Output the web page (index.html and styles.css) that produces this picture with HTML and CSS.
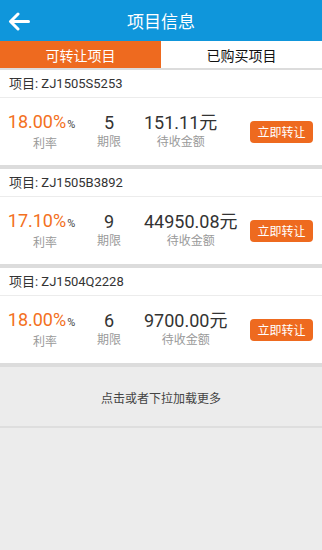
FILE: index.html
```html
<!DOCTYPE html>
<html lang="zh">
<head>
<meta charset="utf-8">
<title>项目信息</title>
<link rel="stylesheet" href="styles.css">
</head>
<body>
<header class="topbar">
  <span class="back">
    <svg width="22" height="20" viewBox="0 0 22 20"><path d="M20.5 9.5H3M10 2L2.5 9.5L10 17" fill="none" stroke="#fff" stroke-width="3" stroke-linecap="round" stroke-linejoin="round"/></svg>
  </span>
  <h1 class="title">项目信息</h1>
  <span></span>
</header>
<nav class="tabs">
  <div class="tab active">可转让项目</div>
  <div class="tab">已购买项目</div>
</nav>
<main class="list">
  <section class="card">
    <div class="card-head">项目: ZJ1505S5253</div>
    <div class="card-body">
      <div class="col rate"><div class="num">18.00%<small>%</small></div><div class="lbl">利率</div></div>
      <div class="col term"><div class="num dark">5</div><div class="lbl">期限</div></div>
      <div class="col amount"><div class="num dark">151.11元</div><div class="lbl">待收金额</div></div>
      <button class="btn">立即转让</button>
    </div>
  </section>
  <section class="card">
    <div class="card-head">项目: ZJ1505B3892</div>
    <div class="card-body">
      <div class="col rate"><div class="num">17.10%<small>%</small></div><div class="lbl">利率</div></div>
      <div class="col term"><div class="num dark">9</div><div class="lbl">期限</div></div>
      <div class="col amount"><div class="num dark">44950.08元</div><div class="lbl">待收金额</div></div>
      <button class="btn">立即转让</button>
    </div>
  </section>
  <section class="card">
    <div class="card-head">项目: ZJ1504Q2228</div>
    <div class="card-body">
      <div class="col rate"><div class="num">18.00%<small>%</small></div><div class="lbl">利率</div></div>
      <div class="col term"><div class="num dark">6</div><div class="lbl">期限</div></div>
      <div class="col amount"><div class="num dark">9700.00元</div><div class="lbl">待收金额</div></div>
      <button class="btn">立即转让</button>
    </div>
  </section>
  <div class="more">点击或者下拉加载更多</div>
</main>
</body>
</html>
```
FILE: styles.css
```css
* { box-sizing: border-box; }
html, body { margin: 0; padding: 0; }
body {
  width: 322px;
  min-height: 550px;
  background: #ececec;
  font-family: Roboto, "Noto Sans CJK SC", sans-serif;
  color: #333;
}
.topbar {
  height: 41px;
  background: #0f96db;
  display: grid;
  grid-template-columns: 40px 1fr 40px;
  align-items: center;
}
.back { display: flex; padding-left: 8px; padding-top: 0; }
.title {
  margin: 0;
  text-align: center;
  font-size: 17px;
  font-weight: normal;
  color: #fff;
  line-height: 41px;
  padding-top: 2px;
}
.tabs {
  display: flex;
  height: 29px;
  border-bottom: 2px solid #dcdcdc;
  background: #fff;
}
.tab {
  flex: 1;
  display: flex;
  align-items: center;
  justify-content: center;
  font-size: 14px;
  color: #111;
  padding-top: 1px;
}
.tab.active { background: #ee6a1f; color: #fff; }
.card {
  background: #fff;
  border-bottom: 4px solid #dcdcdc;
}
.card-head {
  height: 28px;
  border-bottom: 1px solid #ececec;
  padding-left: 9px;
  font-size: 13px;
  line-height: 28px;
  color: #333;
}
.card-body {
  height: 67px;
  display: flex;
  align-items: center;
  padding: 0 9px;
}
.col { display: flex; flex-direction: column; align-items: center; }
.rate { width: 65px; }
.rate .lbl { padding-left: 7px; }
.term { width: 70px; }
.num {
  font-size: 18px;
  line-height: 22px;
  color: #f37021;
  white-space: nowrap;
}
.num.dark { color: #333; }
.num small { font-size: 11px; color: #444; margin-left: 1px; }
.lbl {
  font-size: 12px;
  line-height: 17px;
  color: #9a9a9a;
}
.btn {
  margin-left: auto;
  width: 63px;
  height: 22px;
  border: 0;
  border-radius: 4px;
  background: #ee6a1f;
  color: #fff;
  font-family: inherit;
  font-size: 12px;
  padding: 0;
}
.more {
  height: 61px;
  border-bottom: 2px solid #dedede;
  display: flex;
  align-items: center;
  justify-content: center;
  font-size: 12px;
  color: #444;
  padding-top: 1px;
}
```
